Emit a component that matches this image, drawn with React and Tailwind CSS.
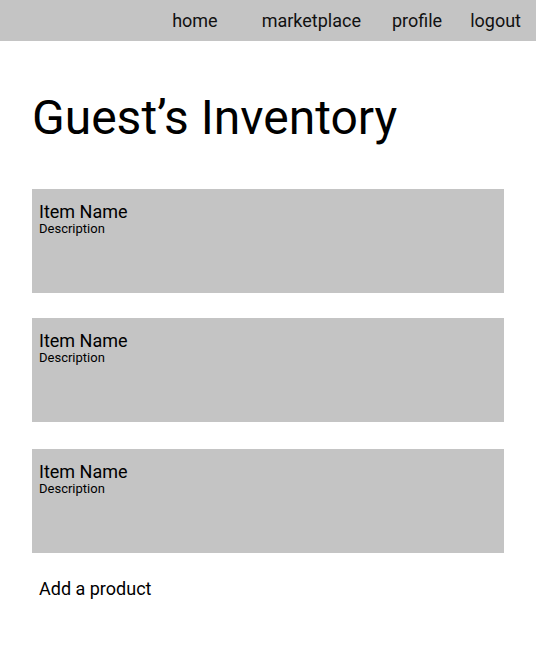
export default function App() {
  const items = [
    { mt: "mt-[43px]" },
    { mt: "mt-[25px]" },
    { mt: "mt-[27px]" },
  ];
  return (
    <div className="w-[536px] min-h-[672px] bg-white text-black" style={{ fontFamily: "Roboto, 'Noto Sans', sans-serif" }}>
      <nav className="h-[41px] bg-[#c4c4c4] flex items-center justify-end pr-[15px] text-[18px] leading-none text-[#111]">
        <a className="pt-[1px]">home</a>
        <a className="ml-[44px] pt-[1px]">marketplace</a>
        <a className="ml-[31px] pt-[1px]">profile</a>
        <a className="ml-[28px] pt-[1px]">logout</a>
      </nav>
      <div className="px-[32px]">
        <h1 className="mt-[49px] text-[48px] leading-[56px] font-normal">Guest’s Inventory</h1>
        {items.map((it, i) => (
          <div key={i} className={`${it.mt} h-[104px] bg-[#c4c4c4] px-[7px] pt-[14px]`}>
            <div className="text-[18px] leading-[18px]">Item Name</div>
            <div className="text-[13px] leading-[16px]">Description</div>
          </div>
        ))}
        <div className="mt-[25px] px-[7px] text-[18px] leading-[21px]">Add a product</div>
      </div>
    </div>
  );
}
